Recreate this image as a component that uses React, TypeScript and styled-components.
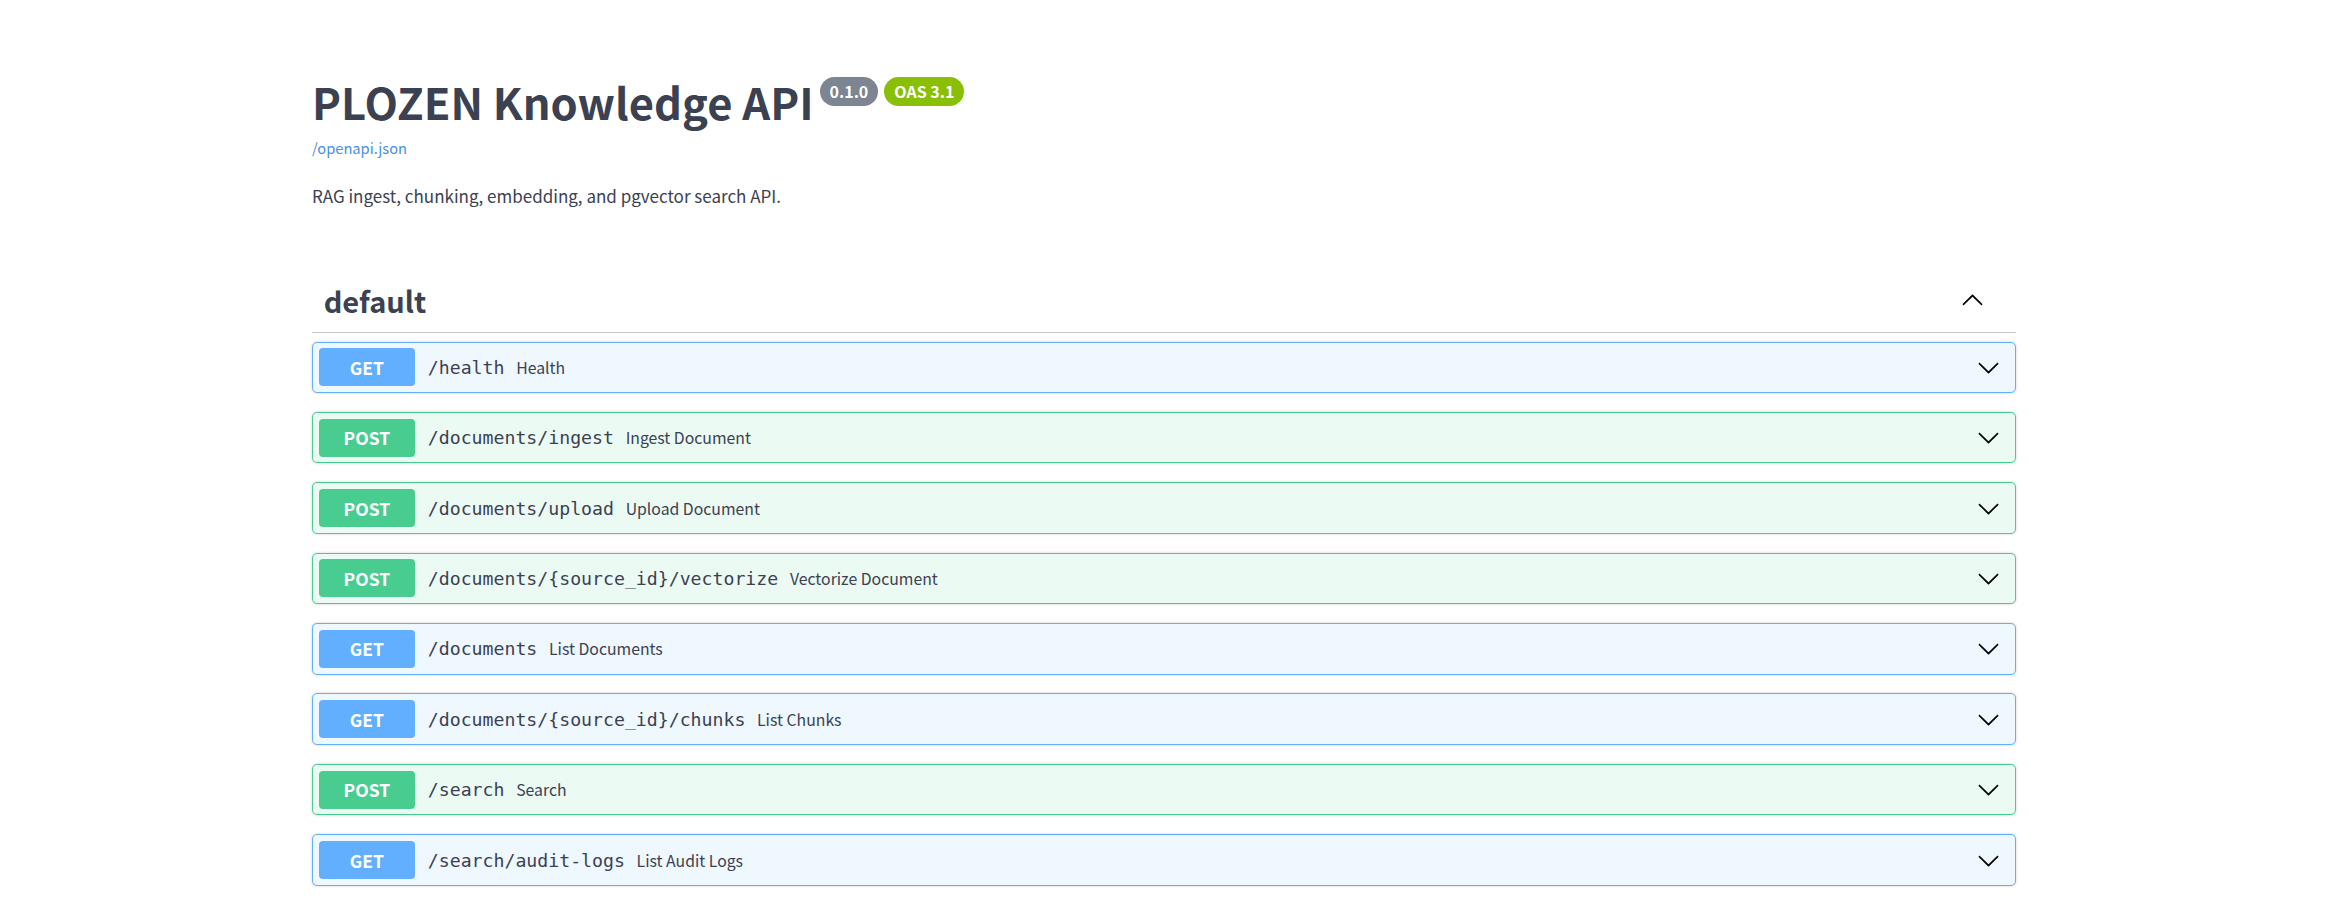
import React from 'react';
import styled, { createGlobalStyle } from 'styled-components';

const GlobalStyle = createGlobalStyle`
  html, body {
    margin: 0;
    padding: 0;
    background: #fff;
  }
  body {
    font-family: "Noto Sans CJK KR", "Noto Sans", sans-serif;
    color: #3b4151;
  }
`;

type Method = 'GET' | 'POST';

interface Operation {
  method: Method;
  path: string;
  summary: string;
}

const operations: Operation[] = [
  { method: 'GET', path: '/health', summary: 'Health' },
  { method: 'POST', path: '/documents/ingest', summary: 'Ingest Document' },
  { method: 'POST', path: '/documents/upload', summary: 'Upload Document' },
  { method: 'POST', path: '/documents/{source_id}/vectorize', summary: 'Vectorize Document' },
  { method: 'GET', path: '/documents', summary: 'List Documents' },
  { method: 'GET', path: '/documents/{source_id}/chunks', summary: 'List Chunks' },
  { method: 'POST', path: '/search', summary: 'Search' },
  { method: 'GET', path: '/search/audit-logs', summary: 'List Audit Logs' },
];

const methodColors: Record<Method, { main: string; bg: string }> = {
  GET: { main: '#61affe', bg: '#eff7ff' },
  POST: { main: '#49cc90', bg: '#ecfaf4' },
};

const Page = styled.div`
  width: 1704px;
  margin: 0 auto;
  padding: 70px 0 40px;
`;

const TitleRow = styled.div`
  display: flex;
  align-items: flex-start;
`;

const Title = styled.h2`
  margin: 0;
  font-size: 43.5px;
  font-weight: 700;
  color: #3b4151;
`;

const VersionBadge = styled.span<{ $color: string }>`
  display: inline-block;
  margin: 7px 0 0 6px;
  padding: 0 10px;
  height: 29px;
  line-height: 29px;
  border-radius: 15px;
  background: ${(p) => p.$color};
  color: #fff;
  font-size: 16px;
  font-weight: 700;
`;

const SpecLink = styled.a`
  display: block;
  margin-top: 4px;
  color: #4990e2;
  font-size: 14.7px;
  text-decoration: none;
`;

const Description = styled.p`
  margin: 25px 0 0;
  font-size: 17px;
  color: #3b4151;
`;

const TagSection = styled.section`
  margin-top: 60px;
`;

const TagHeader = styled.h3`
  display: flex;
  align-items: center;
  margin: 0 0 8.5px;
  padding: 11px 23.3px 11px 11.7px;
  border-bottom: 1px solid rgba(59, 65, 81, 0.3);
  font-size: 29px;
  font-weight: 700;
  color: #3b4151;
`;

const TagName = styled.span`
  flex: 1;
`;

const Chevron = styled.svg<{ $up?: boolean }>`
  width: 23px;
  height: 23px;
  margin-right: 9px;
  flex-shrink: 0;
  transform: ${(p) => (p.$up ? 'rotate(180deg)' : 'none')};
`;

const OpList = styled.div`
  display: flex;
  flex-direction: column;
  gap: 18.8px;
`;

const OpBlock = styled.div<{ $method: Method }>`
  display: flex;
  align-items: center;
  padding: 5.8px;
  border: 1px solid ${(p) => methodColors[p.$method].main};
  border-radius: 5px;
  background: ${(p) => methodColors[p.$method].bg};
  box-shadow: 0 0 3px rgba(0, 0, 0, 0.19);
`;

const MethodBadge = styled.span<{ $method: Method }>`
  display: inline-flex;
  align-items: center;
  justify-content: center;
  width: 96px;
  height: 38px;
  border-radius: 4px;
  background: ${(p) => methodColors[p.$method].main};
  color: #fff;
  font-size: 17.5px;
  font-weight: 700;
`;

const OpPath = styled.span`
  padding: 0 11.7px 0 13px;
  font-family: "DejaVu Sans Mono", monospace;
  font-size: 18.2px;
  color: #3b4151;
`;

const OpSummary = styled.span`
  flex: 1;
  font-size: 15.8px;
  color: #3b4151;
`;

const ChevronIcon = ({ up }: { up?: boolean }) => (
  <Chevron $up={up} viewBox="0 0 20 20" aria-hidden="true">
    <path
      fill="#000"
      d="M17.418 6.109c.272-.268.709-.268.979 0s.271.701 0 .969l-7.908 7.83c-.27.268-.707.268-.979 0l-7.908-7.83c-.27-.268-.27-.701 0-.969.271-.268.709-.268.979 0L10 13.25l7.418-7.141z"
    />
  </Chevron>
);

const App = () => (
  <>
    <GlobalStyle />
    <Page>
      <TitleRow>
        <Title>PLOZEN Knowledge API</Title>
        <VersionBadge $color="#7d8492">0.1.0</VersionBadge>
        <VersionBadge $color="#89bf04">OAS 3.1</VersionBadge>
      </TitleRow>
      <SpecLink href="#">/openapi.json</SpecLink>
      <Description>RAG ingest, chunking, embedding, and pgvector search API.</Description>

      <TagSection>
        <TagHeader>
          <TagName>default</TagName>
          <ChevronIcon up />
        </TagHeader>
        <OpList>
          {operations.map((op) => (
            <OpBlock key={op.method + op.path} $method={op.method}>
              <MethodBadge $method={op.method}>{op.method}</MethodBadge>
              <OpPath>{op.path}</OpPath>
              <OpSummary>{op.summary}</OpSummary>
              <ChevronIcon />
            </OpBlock>
          ))}
        </OpList>
      </TagSection>
    </Page>
  </>
);

export default App;
